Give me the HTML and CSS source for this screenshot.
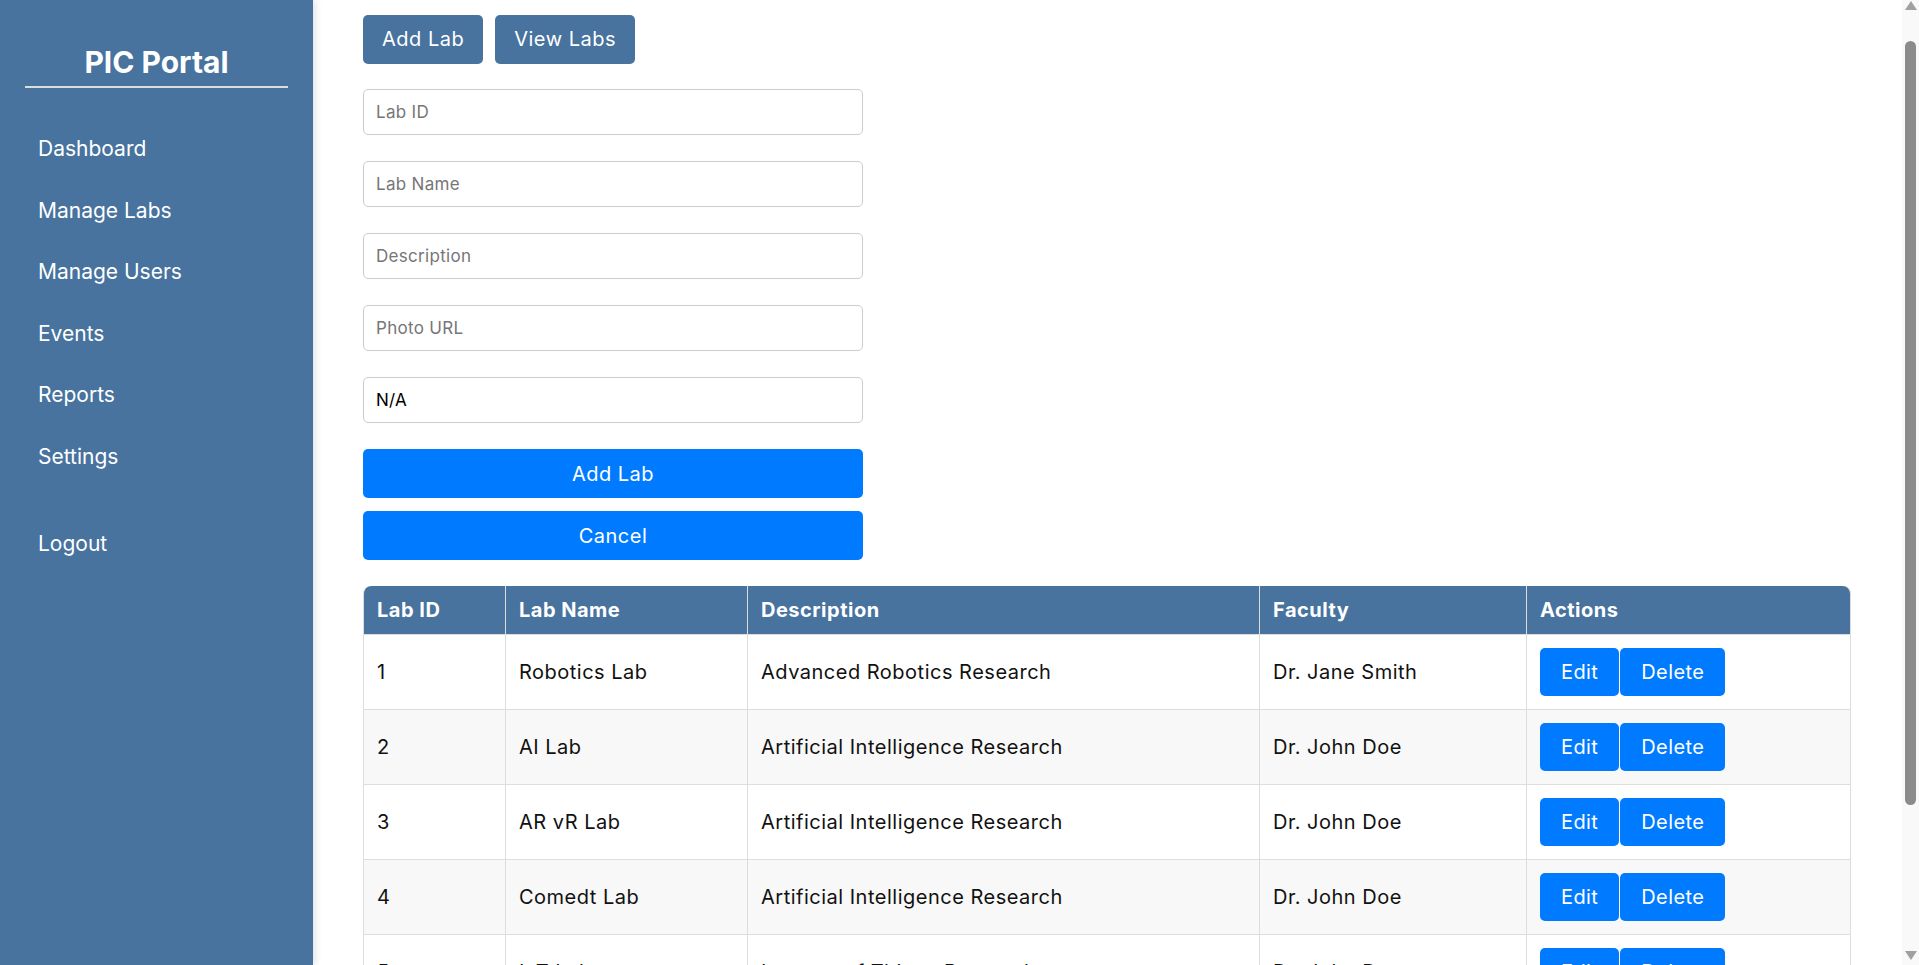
FILE: index.html
```html
<!DOCTYPE html>
<html lang="en">
<head>
<meta charset="utf-8">
<title>PIC Portal - Manage Labs</title>
<link rel="stylesheet" href="styles.css">
</head>
<body>
<div class="layout">
  <aside class="sidebar">
    <h2 class="brand">PIC Portal</h2>
    <nav class="nav">
      <a class="nav-link" href="#">Dashboard</a>
      <a class="nav-link" href="#">Manage Labs</a>
      <a class="nav-link" href="#">Manage Users</a>
      <a class="nav-link" href="#">Events</a>
      <a class="nav-link" href="#">Reports</a>
      <a class="nav-link" href="#">Settings</a>
      <a class="nav-link nav-logout" href="#">Logout</a>
    </nav>
  </aside>

  <main class="main">
    <div class="toolbar">
      <button class="tab-btn" type="button">Add Lab</button>
      <button class="tab-btn" type="button">View Labs</button>
    </div>

    <form class="lab-form">
      <input class="field" type="text" placeholder="Lab ID">
      <input class="field" type="text" placeholder="Lab Name">
      <input class="field" type="text" placeholder="Description">
      <input class="field" type="text" placeholder="Photo URL">
      <input class="field" type="text" value="N/A">
      <div class="form-actions">
        <button class="primary-btn" type="button">Add Lab</button>
        <button class="primary-btn" type="button">Cancel</button>
      </div>
    </form>

    <table class="labs-table">
      <colgroup>
        <col class="col-id">
        <col class="col-name">
        <col class="col-desc">
        <col class="col-faculty">
        <col class="col-actions">
      </colgroup>
      <thead>
        <tr>
          <th>Lab ID</th>
          <th>Lab Name</th>
          <th>Description</th>
          <th>Faculty</th>
          <th>Actions</th>
        </tr>
      </thead>
      <tbody>
        <tr>
          <td>1</td>
          <td>Robotics Lab</td>
          <td>Advanced Robotics Research</td>
          <td>Dr. Jane Smith</td>
          <td><div class="row-actions"><button class="row-btn" type="button">Edit</button><button class="row-btn" type="button">Delete</button></div></td>
        </tr>
        <tr>
          <td>2</td>
          <td>AI Lab</td>
          <td>Artificial Intelligence Research</td>
          <td>Dr. John Doe</td>
          <td><div class="row-actions"><button class="row-btn" type="button">Edit</button><button class="row-btn" type="button">Delete</button></div></td>
        </tr>
        <tr>
          <td>3</td>
          <td>AR vR Lab</td>
          <td>Artificial Intelligence Research</td>
          <td>Dr. John Doe</td>
          <td><div class="row-actions"><button class="row-btn" type="button">Edit</button><button class="row-btn" type="button">Delete</button></div></td>
        </tr>
        <tr>
          <td>4</td>
          <td>Comedt Lab</td>
          <td>Artificial Intelligence Research</td>
          <td>Dr. John Doe</td>
          <td><div class="row-actions"><button class="row-btn" type="button">Edit</button><button class="row-btn" type="button">Delete</button></div></td>
        </tr>
        <tr>
          <td>5</td>
          <td>IoT Lab</td>
          <td>Internet of Things Research</td>
          <td>Dr. John Doe</td>
          <td><div class="row-actions"><button class="row-btn" type="button">Edit</button><button class="row-btn" type="button">Delete</button></div></td>
        </tr>
        <tr>
          <td>6</td>
          <td>Data Lab</td>
          <td>Data Science Research</td>
          <td>Dr. Jane Smith</td>
          <td><div class="row-actions"><button class="row-btn" type="button">Edit</button><button class="row-btn" type="button">Delete</button></div></td>
        </tr>
        <tr>
          <td>7</td>
          <td>Cyber Lab</td>
          <td>Cyber Security Research</td>
          <td>Dr. John Doe</td>
          <td><div class="row-actions"><button class="row-btn" type="button">Edit</button><button class="row-btn" type="button">Delete</button></div></td>
        </tr>
      </tbody>
    </table>
  </main>

  <div class="scroll-rail" aria-hidden="true">
    <svg class="rail-arrow rail-up" width="12" height="9" viewBox="0 0 12 9"><polygon points="6,0 12,9 0,9" fill="#a0a0a0"/></svg>
    <div class="rail-thumb"></div>
    <svg class="rail-arrow rail-down" width="12" height="9" viewBox="0 0 12 9"><polygon points="0,0 12,0 6,9" fill="#a0a0a0"/></svg>
  </div>
</div>
</body>
</html>
```

FILE: styles.css
```css
* {
  box-sizing: border-box;
}

html, body {
  margin: 0;
  padding: 0;
  background: #ffffff;
  height: 100%;
  overflow: hidden;
}

body {
  font-family: Inter, "Open Sans", "Liberation Sans", sans-serif;
  color: #1a1a1a;
}

.layout {
  display: flex;
  height: 100vh;
}

/* ---------- Sidebar ---------- */
.sidebar {
  flex: 0 0 313px;
  width: 313px;
  height: 100%;
  background: #47739e;
  color: #ffffff;
  padding: 0 25px;
  box-shadow: 2px 0 7px rgba(0, 0, 0, 0.12);
  position: relative;
  z-index: 1;
}

.brand {
  margin: 45px 0 0;
  padding-bottom: 6px;
  border-bottom: 2px solid #dcdcdc;
  font-size: 30px;
  line-height: 35px;
  font-weight: 700;
  text-align: center;
  color: #ffffff;
}

.nav {
  display: flex;
  flex-direction: column;
  margin-top: 30px;
}

.nav-link {
  display: block;
  padding: 18px 13px;
  font-size: 21px;
  line-height: 25.6px;
  color: #ffffff;
  text-decoration: none;
}

.nav-logout {
  margin-top: 25px;
}

/* ---------- Main (scroll area) ---------- */
.main {
  flex: 1 1 auto;
  min-width: 0;
  height: 100%;
  overflow-y: auto;
  scrollbar-width: none;
  padding: 15px 50px 16px 50px;
}

.main::-webkit-scrollbar {
  display: none;
}

/* decorative scrollbar rail (matches the browser's classic scrollbar) */
.scroll-rail {
  flex: 0 0 17px;
  width: 17px;
  height: 100%;
  background: #f9f9f9;
  display: flex;
  flex-direction: column;
  align-items: center;
  padding: 1px 0 5px;
}

.rail-arrow {
  display: block;
  flex: 0 0 auto;
}

.rail-thumb {
  width: 11px;
  height: 764px;
  margin-top: 31px;
  background: #8b8b8b;
  border-radius: 6px;
}

.rail-down {
  margin-top: auto;
}

.toolbar {
  display: flex;
  gap: 12px;
}

.tab-btn {
  background: #47739e;
  color: #ffffff;
  border: none;
  border-radius: 5px;
  font-family: inherit;
  font-size: 20px;
  line-height: 25px;
  padding: 12px 19px;
  letter-spacing: 0.5px;
  cursor: pointer;
}

.lab-form {
  width: 500px;
  margin-top: 25px;
  display: flex;
  flex-direction: column;
  gap: 26px;
}

.field {
  height: 46px;
  width: 100%;
  border: 1px solid #cccccc;
  border-radius: 5px;
  padding: 0 12px;
  font-family: inherit;
  font-size: 17px;
  color: #000000;
  background: #ffffff;
  letter-spacing: 0.3px;
}

.field::placeholder {
  color: #767676;
}

.form-actions {
  display: flex;
  flex-direction: column;
  gap: 13px;
}

.primary-btn {
  height: 49px;
  width: 100%;
  background: #007bff;
  color: #ffffff;
  border: none;
  border-radius: 5px;
  font-family: inherit;
  font-size: 20px;
  letter-spacing: 0.5px;
  cursor: pointer;
}

/* ---------- Table ---------- */
.labs-table {
  width: 1488px;
  margin-top: 26px;
  border-collapse: separate;
  border-spacing: 0;
  table-layout: fixed;
}

.col-id { width: 143px; }
.col-name { width: 242px; }
.col-desc { width: 512px; }
.col-faculty { width: 267px; }
.col-actions { width: 324px; }

.labs-table th {
  background: #47739e;
  color: #ffffff;
  text-align: left;
  font-size: 20px;
  font-weight: 700;
  line-height: 24px;
  letter-spacing: 0.5px;
  padding: 12px 13px;
  border-right: 1px solid #dddddd;
  border-bottom: 1px solid #dddddd;
}

.labs-table th:first-child {
  border-left: 1px solid #dddddd;
  border-top-left-radius: 8px;
}

.labs-table th:last-child {
  border-top-right-radius: 8px;
}

.labs-table td {
  font-size: 20px;
  line-height: 24px;
  letter-spacing: 0.5px;
  color: #111111;
  padding: 13px 13px;
  vertical-align: middle;
  border-right: 1px solid #dddddd;
  border-bottom: 1px solid #dddddd;
}

.labs-table td:first-child {
  border-left: 1px solid #dddddd;
}

.labs-table tbody tr:nth-child(even) td {
  background: #f8f8f8;
}

.row-actions {
  display: flex;
  gap: 1px;
}

.row-btn {
  height: 48px;
  padding: 0 21px;
  background: #007bff;
  color: #ffffff;
  border: none;
  border-radius: 5px;
  font-family: inherit;
  font-size: 20px;
  letter-spacing: 0.4px;
  cursor: pointer;
}
```
